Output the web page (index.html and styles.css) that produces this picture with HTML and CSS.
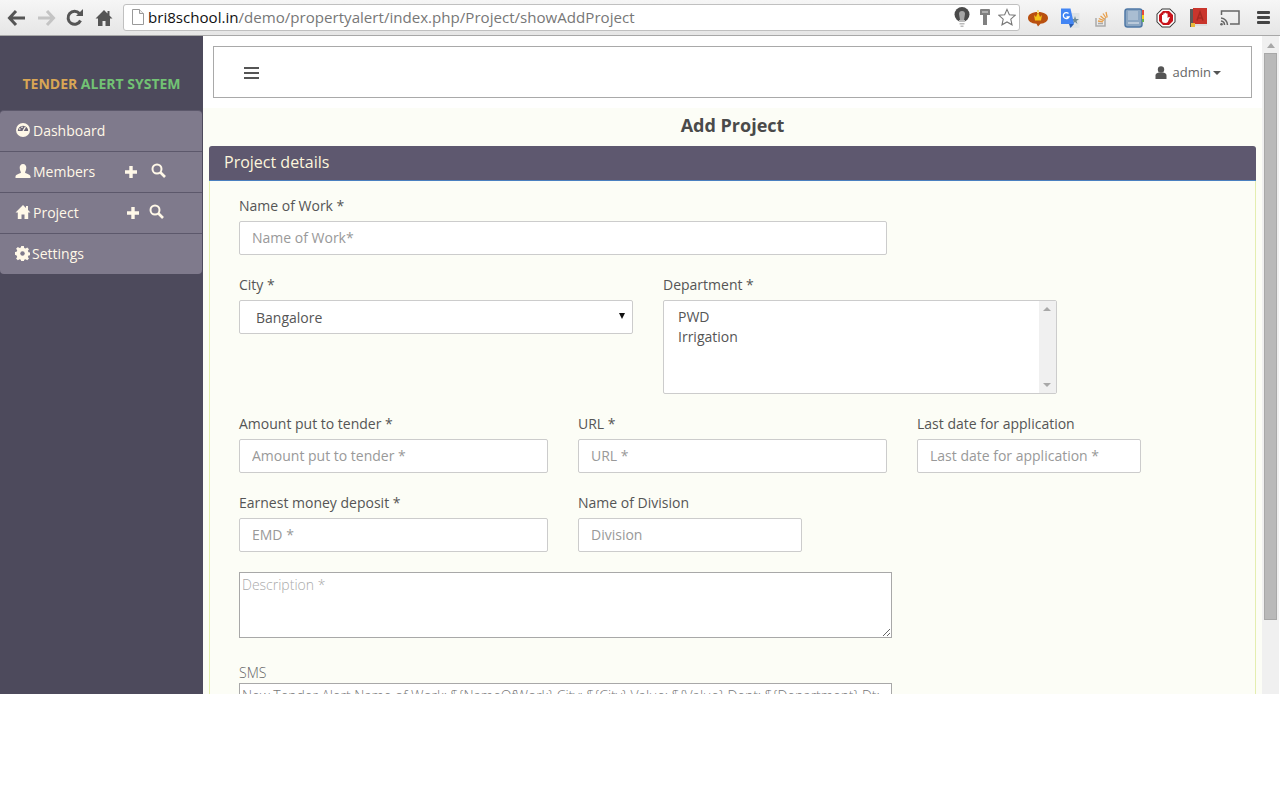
FILE: index.html
```html
<!DOCTYPE html>
<html lang="en">
<head>
  <meta charset="UTF-8">
  <title>Tender Alert System</title>
  <link rel="stylesheet" href="styles.css">
</head>
<body>
  <!-- browser chrome -->
  <div class="toolbar">
    <div class="nav-btns">
      <svg width="20" height="20" viewBox="0 0 20 20"><path d="M9 3 2.500 10 9 17M3 10h15" fill="none" stroke="#555" stroke-width="3"/></svg>
      <svg width="20" height="20" viewBox="0 0 20 20"><path d="M11 3l6.500 7L11 17M17 10H2" fill="none" stroke="#c4c4c4" stroke-width="3"/></svg>
      <svg width="20" height="20" viewBox="0 0 20 20"><path d="M15.500 12.500A6.500 6.500 0 1 1 14.500 5.500" fill="none" stroke="#555" stroke-width="3"/><path d="M11 8h7V1z" fill="#555"/></svg>
      <svg width="20" height="20" viewBox="0 0 20 20"><path d="M10 2 1.500 10.500H4V18h4.500v-5h3v5H16v-7.500h2.500L15.500 7.500V3h-2v2.500z" fill="#555"/></svg>
    </div>
    <div class="omnibox">
      <svg class="page-icon" width="14" height="16" viewBox="0 0 14 16"><path d="M1.500.5h7l4 4v11h-11z" fill="#fff" stroke="#999"/><path d="M8.500.5v4h4" fill="#eee" stroke="#999"/></svg>
      <span class="url"><span class="host">bri8school.in</span>/demo/propertyalert/index.php/Project/showAddProject</span>
      <svg class="omni-icon bulb" width="16" height="20" viewBox="0 0 16 20"><circle cx="8" cy="7.500" r="7.500" fill="#4a4a4a"/><path d="M5 7a3 3 0 0 1 6 0l-1 6H6z" fill="#a5a5a5"/><path d="M5 13h6v2H5zM5.500 16h5v1.500h-5zM6.500 18.500h3V20h-3z" fill="#bbb"/></svg>
      <svg class="omni-icon key" width="10" height="16" viewBox="0 0 10 16"><path d="M0 1q0-1 1-1h8q1 0 1 1v5H7v10H3V6H0z" fill="#808080"/><path d="M2 2h6v2H2z" fill="#b0b0b0"/></svg>
      <svg class="omni-icon star" width="18" height="18" viewBox="0 0 20 20"><path d="M10 1.500l2.600 6 6.400.6-4.800 4.300 1.400 6.300L10 15.500l-5.600 3.200 1.400-6.300L1 8.100l6.400-.6z" fill="#fff" stroke="#777" stroke-width="1.200"/></svg>
    </div>
    <div class="extensions">
      <span class="ext"><svg width="20" height="18" viewBox="0 0 20 18"><path d="M10 3c6 0 10 2.500 10 6 0 3-3 5.500-7.500 5.800L10 17.500l-1.500-2.700C3 14.500 0 12 0 9c0-3.500 4-6 10-6z" fill="#b9500f"/><path d="M6 6l2 2L10 3l2 5 2-2-1 5.500H7z" fill="#f5c518"/><path d="M9 1h2v3H9z" fill="#f7e08a"/></svg></span>
      <span class="ext"><svg width="20" height="20" viewBox="0 0 20 20"><path d="M9 5h10.500v15H9z" fill="#dfe3e5"/><path d="M15 8l1 3h3l-2.500 2 1 3-2.500-2-2.500 2 1-3L11 11h3z" fill="#6d8a96"/><path d="M1 .5h9.500L14 16H1z" fill="#4285f4"/><path d="M9 16h5l-3.500 4z" fill="#2a5db0"/><path d="M8.500 5.500a3 3 0 1 0 .5 3.500H6.500" fill="none" stroke="#fff" stroke-width="1.300"/></svg></span>
      <span class="ext"><svg width="14" height="18" viewBox="0 0 14 18"><path d="M1 9v8h9V9" fill="none" stroke="#aaa" stroke-width="1.500"/><path d="M3 14.500h5" stroke="#aaa" stroke-width="1.500"/><path d="M3 12l5 .8M3.800 9.500l5 2.200M5.500 7l4.200 3.600M8 4.500l3 4.500M11 3l1.200 5.500" stroke="#e8a04c" stroke-width="1.300"/></svg></span>
      <span class="ext"><svg width="20" height="20" viewBox="0 0 20 20"><rect x="1" y="1" width="17" height="18" rx="2.500" fill="#8ba6c2" stroke="#4f78a6" stroke-width="1.500"/><rect x="4" y="3" width="10" height="9" fill="#a9bdd2"/><path d="M4 15h11" stroke="#c8d5e2" stroke-width="1.500"/><path d="M18 2h2v5h-2z" fill="#e34a3a"/><path d="M18 7h2v4h-2z" fill="#f2d21c"/><path d="M18 11h2v3h-2z" fill="#6ab04c"/></svg></span>
      <span class="ext"><svg width="20" height="20" viewBox="0 0 20 20"><path d="M6 .5h8L19.500 6v8L14 19.500H6L.5 14V6z" fill="#333"/><path d="M6.300 1.500h7.400l4.800 4.800v7.400l-4.800 4.800H6.300l-4.800-4.800V6.300z" fill="#fff"/><path d="M7 3h6l4 4v6l-4 4H7l-4-4V7z" fill="#c9131b"/><path d="M6 9.500V7h1.300v2.500V5.500h1.400v4V4.800h1.500v4.700V5.500h1.400V10l1.200-1h1.200L11.800 14q-.8 1-2.300 1-3.500 0-3.500-2.500z" fill="#fff"/></svg></span>
      <span class="ext"><svg width="17" height="20" viewBox="0 0 17 20"><path d="M0 1h3v18H0z" fill="#5a5a5a"/><path d="M3 0h14v16H3z" fill="#c9352c"/><path d="M7 12.500 10 4l3 8.500M8 10h4" fill="none" stroke="#a52820" stroke-width="1.500"/><path d="M3 16h14v2H3z" fill="#ddd"/><path d="M1 15h4v4H1z" fill="#e8b93c"/></svg></span>
      <span class="ext"><svg width="20" height="16" viewBox="0 0 20 16"><path d="M1.500 5V1h17.500v13H10" fill="none" stroke="#666" stroke-width="1.500"/><path d="M1 8a7 7 0 0 1 6.500 7M1 11a4 4 0 0 1 3.500 4" fill="none" stroke="#666" stroke-width="1.500"/><circle cx="1.500" cy="14.300" r="1.300" fill="#666"/></svg></span>
      <span class="ext"><span class="menu-btn"><i></i><i></i><i></i></span></span>
    </div>
  </div>

  <div class="app">
    <aside class="sidebar">
      <div class="brand"><span class="brand-a">TENDER</span> <span class="brand-b">ALERT SYSTEM</span></div>
      <ul class="side-menu">
        <li>
          <svg class="side-icon" width="16" height="16" viewBox="0 0 16 16"><circle cx="8" cy="8" r="7" fill="#fff8e8"/><path d="M2.800 9a5.200 5.200 0 0 1 10.400 0z" fill="#6a6577"/><path d="M8 9l2.400-4" stroke="#fff8e8" stroke-width="1.300"/><circle cx="4.800" cy="7" r=".8" fill="#fff8e8"/><circle cx="7" cy="5.300" r=".8" fill="#fff8e8"/></svg>
          <span>Dashboard</span>
        </li>
        <li>
          <svg class="side-icon" width="16" height="16" viewBox="0 0 16 16"><path d="M8 1c2.200 0 3.300 1.800 3.300 3.800S10.200 9 10 9.500c0 1 5.500 1.500 5.500 4V15H.5v-1.500c0-2.500 5.500-3 5.500-4C5.800 9 4.700 6.800 4.700 4.800S5.800 1 8 1z" fill="#fff8e8"/></svg>
          <span class="side-label">Members</span>
          <svg class="act plus" width="12" height="12" viewBox="0 0 12 12"><path d="M6 0v12M0 6h12" stroke="#fff8e8" stroke-width="3.400"/></svg>
          <svg class="act find-m" width="15" height="15" viewBox="0 0 15 15"><circle cx="6" cy="6" r="4.500" fill="none" stroke="#fff8e8" stroke-width="2"/><path d="M9.500 9.500 14 14" stroke="#fff8e8" stroke-width="2.600"/></svg>
        </li>
        <li>
          <svg class="side-icon" width="16" height="16" viewBox="0 0 16 16"><path d="M8 1 .5 8.500h2.300V15h3.700v-4.500h3V15h3.700V8.500h2.300L13 6V2h-2v2z" fill="#fff8e8"/></svg>
          <span class="side-label project">Project</span>
          <svg class="act plus" width="12" height="12" viewBox="0 0 12 12"><path d="M6 0v12M0 6h12" stroke="#fff8e8" stroke-width="3.400"/></svg>
          <svg class="act find-p" width="15" height="15" viewBox="0 0 15 15"><circle cx="6" cy="6" r="4.500" fill="none" stroke="#fff8e8" stroke-width="2"/><path d="M9.500 9.500 14 14" stroke="#fff8e8" stroke-width="2.600"/></svg>
        </li>
        <li>
          <svg class="side-icon gear" width="15" height="15" viewBox="0 0 16 16"><path d="M6.500 0h3l.4 2.200 1.600.7L13.400 1.600l2 2-1.300 1.900.7 1.600 2.200.4v3l-2.200.4-.7 1.600 1.300 1.900-2 2-1.900-1.300-1.600.7-.4 2.200h-3l-.4-2.200-1.600-.7-1.900 1.300-2-2 1.300-1.900-.7-1.600L-1 10V7l2.200-.4.7-1.600L.6 3.100l2-2 1.900 1.300 1.600-.7z" fill="#fff8e8" transform="translate(.6 0) scale(.93)"/><circle cx="8" cy="8" r="2.400" fill="#7f7a8c"/></svg>
          <span>Settings</span>
        </li>
      </ul>
    </aside>

    <main class="content">
      <nav class="topnav">
        <div class="burger"><i></i><i></i><i></i></div>
        <div class="user">
          <svg width="12" height="13" viewBox="0 0 12 13"><circle cx="6" cy="3.500" r="3.200" fill="#555"/><path d="M.5 13V9.500C.5 7.500 2 7 3.500 6.500h5C10 7 11.500 7.500 11.500 9.500V13z" fill="#555"/></svg>
          <span>admin</span><b class="caret"></b>
        </div>
      </nav>
      <div class="page">
        <h3 class="page-title">Add Project</h3>
        <section class="panel">
          <div class="panel-heading">Project details</div>
          <div class="panel-body">
            <form class="row">
              <div class="field col-8">
                <label>Name of Work *</label>
                <input type="text" placeholder="Name of Work*">
              </div>
              <div class="field col-5">
                <label>City *</label>
                <div class="fake-select">Bangalore<b></b></div>
              </div>
              <div class="field col-5">
                <label>Department *</label>
                <div class="fake-multi">
                  <div class="opts"><div>PWD</div><div>Irrigation</div></div>
                  <div class="multi-scroll"><b class="up"></b><b class="down"></b></div>
                </div>
              </div>
              <div class="field col-4">
                <label>Amount put to tender *</label>
                <input type="text" placeholder="Amount put to tender *">
              </div>
              <div class="field col-4">
                <label>URL *</label>
                <input type="text" placeholder="URL *">
              </div>
              <div class="field col-3">
                <label>Last date for application</label>
                <input type="text" placeholder="Last date for application *">
              </div>
              <div class="field col-4 clear">
                <label>Earnest money deposit *</label>
                <input type="text" placeholder="EMD *">
              </div>
              <div class="field col-3 wrap-after">
                <label>Name of Division</label>
                <input type="text" placeholder="Division">
              </div>
              <div class="field full">
                <textarea class="raw" placeholder="Description *"></textarea>
              </div>
              <div class="field full sms">
                <label class="thin">SMS</label>
                <div class="sms-box">New Tender Alert Name of Work: ${NameOfWork} City: ${City} Value: ${Value} Dept: ${Department} Dt:</div>
              </div>
            </form>
          </div>
        </section>
      </div>
    </main>

    <div class="scrollbar">
      <b class="sb-up"></b>
      <div class="sb-thumb"></div>
    </div>
  </div>
</body>
</html>
```

FILE: styles.css
```css
* {
  box-sizing: border-box;
}
html, body {
  margin: 0;
  height: 800px;
  overflow: hidden;
  background: #fff;
}
body {
  font-family: "Open Sans", sans-serif;
  font-size: 14px;
  color: #555;
}

/* browser chrome */
.toolbar {
  height: 36px;
  display: flex;
  align-items: center;
  background: linear-gradient(#f6f6f6, #e6e6e6);
  border-bottom: 1px solid #a8a8a8;
}
.nav-btns {
  display: flex;
  gap: 9px;
  padding-left: 7px;
  width: 123px;
}
.omnibox {
  width: 897px;
  height: 27px;
  margin-top: -1px;
  display: flex;
  align-items: center;
  padding: 0 3px 0 7px;
  background: #fff;
  border: 1px solid #c0c0c0;
  border-radius: 3px;
}
.page-icon {
  margin-right: 3px;
}
.url {
  flex: 1;
  font-size: 15.1px;
  color: #777;
  white-space: nowrap;
}
.host {
  color: #111;
}
.omni-icon {
  flex: none;
}
.key {
  margin-left: 10px;
}
.star {
  margin-left: 8px;
}
.extensions {
  display: flex;
  padding-left: 2px;
}
.ext {
  width: 32px;
  height: 24px;
  display: flex;
  align-items: center;
  justify-content: center;
}
.menu-btn {
  margin-left: 2px;
  display: flex;
  flex-direction: column;
  gap: 2px;
}
.menu-btn i {
  width: 13px;
  height: 3px;
  background: #444;
  border-radius: 1px;
}

/* page */
.app {
  height: 658px;
  display: flex;
  overflow: hidden;
}
.sidebar {
  width: 203px;
  flex: none;
  background: #4d4a5c;
}
.brand {
  height: 74px;
  padding-top: 38px;
  text-align: center;
  font-weight: 700;
  font-size: 14px;
  line-height: 20px;
}
.brand-a {
  color: #d9a655;
}
.brand-b {
  color: #72c274;
}
.side-menu {
  list-style: none;
  margin: 0 1px 0 0;
  padding: 0;
  background: #7f7a8c;
  border-top: 1px solid #5c586b;
  border-radius: 4px;
  color: #fff8e8;
}
.side-menu li {
  height: 41px;
  display: flex;
  align-items: center;
  padding: 0 0 2px 15px;
  border-bottom: 1px solid #5c586b;
}
.side-menu li:last-child {
  height: 40px;
  border-bottom: none;
}
.side-icon {
  margin-right: 2px;
}
.side-icon.gear {
  margin-right: 2px;
}
.side-label {
  width: 92px;
}
.side-label.project {
  width: 94px;
}
.act {
  margin-left: 8px;
}
.act.plus {
  margin-top: 2px;
  margin-left: 0;
}
.act.find-m {
  margin-left: 14px;
  margin-top: -2px;
}
.act.find-p {
  margin-left: 10px;
  margin-top: -2px;
}

.content {
  flex: 1;
  min-width: 0;
  padding: 10px 6px 0 6px;
}
.topnav {
  height: 52px;
  margin: 0 4px;
  display: flex;
  align-items: center;
  justify-content: space-between;
  padding: 2px 30px 0 30px;
  background: #fff;
  border: 1px solid #a9a9a9;
}
.burger {
  display: flex;
  flex-direction: column;
  gap: 3px;
}
.burger i {
  width: 15px;
  height: 2px;
  background: #555;
}
.user {
  display: flex;
  align-items: center;
  margin-top: -2px;
  font-size: 13px;
  color: #666;
}
.user svg {
  margin-right: 6px;
}
.caret {
  width: 0;
  height: 0;
  margin-left: 2px;
  margin-top: 2px;
  border-top: 4px solid #555;
  border-left: 4px solid transparent;
  border-right: 4px solid transparent;
}
.page {
  margin: 10px -6px 0;
  padding: 0 6px;
  height: 600px;
  background: #fcfdf6;
}
.page-title {
  margin: 0;
  height: 38px;
  text-align: center;
  font-size: 18px;
  line-height: 34px;
  font-weight: 700;
  color: #4a4a4a;
}
.panel {
  border: 1px solid #e4eeb0;
  border-radius: 4px;
  height: 600px;
}
.panel-heading {
  height: 35px;
  margin: -1px -1px 0;
  padding: 0 15px;
  background: #5e586f;
  border-bottom: 1px solid #4a80c0;
  border-radius: 3px 3px 0 0;
  color: #fdf6dc;
  font-size: 16px;
  line-height: 32px;
}
.panel-body {
  padding: 15px 14px;
}
.row {
  display: flex;
  flex-wrap: wrap;
  align-items: flex-start;
}
.field {
  padding: 0 15px;
  margin-bottom: 20px;
}
.col-8 { width: 679px; margin-right: 339px; }
.col-5 { width: 424px; }
.col-4 { width: 339px; }
.col-3 { width: 254px; }
.full { width: 100%; }
.wrap-after { margin-right: 420px; }
label {
  display: block;
  height: 25px;
  line-height: 20px;
  color: #555;
}
input, .fake-select, .fake-multi {
  display: block;
  width: 100%;
  height: 34px;
  padding: 5px 12px 7px;
  background: #fff;
  border: 1px solid #ccc;
  border-radius: 2px;
  font: 14px "Open Sans", sans-serif;
  color: #555;
}
input::placeholder {
  color: #999;
  opacity: 1;
}
.fake-select {
  position: relative;
  padding: 7px 16px 5px;
  line-height: 20px;
}
.fake-select b {
  position: absolute;
  right: 7px;
  top: 12px;
  border-top: 6px solid #111;
  border-left: 3px solid transparent;
  border-right: 3px solid transparent;
}
.fake-multi {
  display: flex;
  height: 94px;
  padding: 0;
}
.opts {
  flex: 1;
  padding: 6px 14px;
  line-height: 20px;
}
.multi-scroll {
  position: relative;
  width: 17px;
  background: #f0f0f0;
}
.multi-scroll .up, .multi-scroll .down {
  position: absolute;
  left: 4px;
  border-left: 4px solid transparent;
  border-right: 4px solid transparent;
}
.multi-scroll .up {
  top: 6px;
  border-bottom: 4px solid #a8a8a8;
}
.multi-scroll .down {
  bottom: 6px;
  border-top: 4px solid #a8a8a8;
}
textarea.raw {
  display: block;
  width: 653px;
  height: 66px;
  padding: 2px;
  margin-bottom: 6px;
  background: #fff;
  border: 1px solid #a8a8a8;
  border-radius: 0;
  font: 14px "Open Sans", sans-serif;
  font-weight: 300;
}
textarea.raw::placeholder {
  color: #aaa;
  opacity: 1;
}
.thin {
  height: 19px;
  line-height: 18px;
  font-weight: 300;
  color: #666;
}
.sms-box {
  width: 653px;
  height: 40px;
  padding: 2px;
  overflow: hidden;
  white-space: nowrap;
  background: #fff;
  border: 1px solid #a8a8a8;
  font-weight: 300;
  color: #777;
  letter-spacing: -0.05px;
}

.scrollbar {
  position: relative;
  width: 18px;
  flex: none;
  background: linear-gradient(to right, #f0f0f0 17px, #fff 17px);
}
.sb-up {
  position: absolute;
  top: 7px;
  left: 5px;
  border-bottom: 5px solid #a8a8a8;
  border-left: 4px solid transparent;
  border-right: 4px solid transparent;
}
.sb-thumb {
  position: absolute;
  top: 17px;
  left: 2px;
  width: 13px;
  height: 567px;
  background: #b9b9b9;
  border: 1px solid #a8a8a8;
}
```
